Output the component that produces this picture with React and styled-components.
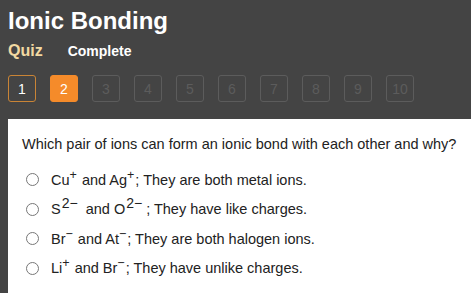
import React from "react";
import styled, { createGlobalStyle } from "styled-components";

const Global = createGlobalStyle`
  html, body {
    margin: 0;
    padding: 0;
    background: #444444;
    font-family: "Liberation Sans", Arial, sans-serif;
  }
`;

const Page = styled.div`
  width: 471px;
  height: 293px;
  overflow: hidden;
  display: flex;
  flex-direction: column;
  padding-left: 8px;
  box-sizing: border-box;
`;

const Title = styled.h1`
  margin: 0;
  padding-top: 7px;
  font-size: 24px;
  line-height: 28px;
  font-weight: bold;
  color: #ffffff;
`;

const Tabs = styled.div`
  display: flex;
  align-items: baseline;
  gap: 25px;
  margin-top: 7px;
`;

const Tab = styled.span`
  font-weight: bold;
  font-size: ${(p) => (p.$active ? "16px" : "14px")};
  color: ${(p) => (p.$active ? "#f2d9a2" : "#ffffff")};
`;

const Steps = styled.div`
  display: flex;
  gap: 14px;
  margin-top: 15px;
`;

const Step = styled.div`
  width: 28px;
  height: 27px;
  box-sizing: border-box;
  border-radius: 3px;
  display: flex;
  align-items: center;
  justify-content: center;
  font-size: 14px;
  border: 1px solid
    ${(p) =>
      p.$state === "current"
        ? "#f58b2a"
        : p.$state === "done"
        ? "#c98436"
        : "#5c5c5c"};
  background: ${(p) => (p.$state === "current" ? "#f58b2a" : "transparent")};
  color: ${(p) => (p.$state === "locked" ? "#5c5c5c" : "#ffffff")};
`;

const Panel = styled.div`
  flex: 1;
  margin-top: 17px;
  background: #ffffff;
  padding: 17px 0 0 14px;
`;

const Question = styled.p`
  margin: 0 0 18px;
  font-size: 14.5px;
  color: #222222;
`;

const Options = styled.div`
  display: flex;
  flex-direction: column;
  gap: 10px;
`;

const Option = styled.label`
  display: flex;
  align-items: center;
  height: 19.5px;
  font-size: 14.5px;
  color: #222222;
`;

const Radio = styled.span`
  width: 11px;
  height: 11px;
  border: 1px solid #777777;
  border-radius: 50%;
  margin: 0 12px 0 4px;
  flex-shrink: 0;
`;

const Sup = styled.sup`
  font-size: ${(p) => (p.$big ? "14px" : "12.5px")};
  line-height: 0;
  margin-right: ${(p) => (p.$big ? "4px" : "1px")};
  margin-left: ${(p) => (p.$big ? "1px" : "0")};
`;

const steps = [1, 2, 3, 4, 5, 6, 7, 8, 9, 10];

export default function App() {
  return (
    <Page>
      <Global />
      <Title>Ionic Bonding</Title>
      <Tabs>
        <Tab $active>Quiz</Tab>
        <Tab>Complete</Tab>
      </Tabs>
      <Steps>
        {steps.map((n) => (
          <Step
            key={n}
            $state={n === 1 ? "done" : n === 2 ? "current" : "locked"}
          >
            {n}
          </Step>
        ))}
      </Steps>
      <Panel>
        <Question>
          Which pair of ions can form an ionic bond with each other and why?
        </Question>
        <Options>
          <Option>
            <Radio />
            <span>
              Cu<Sup>+</Sup> and Ag<Sup>+</Sup>; They are both metal ions.
            </span>
          </Option>
          <Option>
            <Radio />
            <span>
              S<Sup $big>2−</Sup> and O<Sup $big>2−</Sup>; They have like charges.
            </span>
          </Option>
          <Option>
            <Radio />
            <span>
              Br<Sup>−</Sup> and At<Sup>−</Sup>; They are both halogen ions.
            </span>
          </Option>
          <Option>
            <Radio />
            <span>
              Li<Sup>+</Sup> and Br<Sup>−</Sup>; They have unlike charges.
            </span>
          </Option>
        </Options>
      </Panel>
    </Page>
  );
}
